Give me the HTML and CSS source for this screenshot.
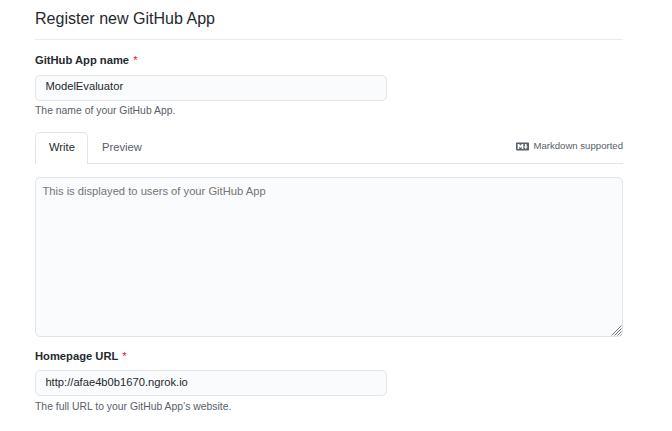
FILE: index.html
```html
<!DOCTYPE html>
<html lang="en">
<head>
<meta charset="utf-8">
<title>Register new GitHub App</title>
<link rel="stylesheet" href="styles.css">
</head>
<body>
<main class="page">
  <h1 class="title">Register new GitHub App</h1>
  <form>
    <label class="label" for="name">GitHub App name <span class="req">*</span></label>
    <input class="field" id="name" type="text" value="ModelEvaluator">
    <p class="note">The name of your GitHub App.</p>
    <div class="tabs">
      <button class="tab selected" type="button">Write</button>
      <button class="tab" type="button">Preview</button>
      <span class="markdown">
        <svg class="md-icon" viewBox="0 0 16 16" aria-hidden="true"><path fill-rule="evenodd" d="M14.85 3H1.15C.52 3 0 3.52 0 4.15v7.69C0 12.48.52 13 1.15 13h13.69c.64 0 1.15-.52 1.15-1.15v-7.7C16 3.52 15.48 3 14.85 3zM9 11H7V8L5.5 9.92 4 8v3H2V5h2l1.5 2L7 5h2v6zm2.99.5L9.5 8H11V5h2v3h1.5l-2.51 3.5z"/></svg>
        Markdown supported
      </span>
    </div>
    <div class="editor">
      <textarea class="description" placeholder="This is displayed to users of your GitHub App"></textarea>
      <svg class="grip" viewBox="0 0 11 11" aria-hidden="true"><path d="M.5 10.5l10-10M3.5 10.5l7-7M6.5 10.5l4-4M9.5 10.5l1-1"/></svg>
    </div>
    <label class="label compact" for="url">Homepage URL <span class="req">*</span></label>
    <input class="field" id="url" type="text" value="http://afae4b0b1670.ngrok.io">
    <p class="note last">The full URL to your GitHub App’s website.</p>
  </form>
</main>
</body>
</html>
```
FILE: styles.css
```css
* { box-sizing: border-box; }
body { margin: 0; background: #fff; color: #24292e; font: 11.2px/16px "Liberation Sans", Arial, sans-serif; }
.page { width: 588px; margin-left: 35px; }
.title { margin: 0 0 12px; height: 40px; padding-top: 8px; border-bottom: 1px solid #e8eaed; font-size: 16.05px; line-height: 21px; font-weight: 400; }
.label { display: block; height: 23px; font-weight: 700; }
.label.compact { height: 22px; }
.req { margin-left: 1px; color: #d92532; font-weight: 400; }
.field { display: block; width: 352px; height: 26px; margin: 0; padding: 0 9.4px 3px; border: 1px solid #e1e4e8; border-radius: 5px; background: #fafbfc; color: #24292e; font: inherit; outline: 0; }
#name { padding-bottom: 4px; }
.note { margin: 2px 0 13px; color: #586069; font-size: 10.4px; line-height: 16px; }
.note.last { margin-top: 3px; margin-bottom: 0; }
.tabs { display: flex; height: 32px; border-bottom: 1px solid #e1e4e8; margin-bottom: 13px; }
.tab { height: 32px; padding: 0 13px 3px; border: 1px solid transparent; border-bottom: 0; background: none; color: #586069; font: inherit; }
.tab.selected { width: 53px; background: #fff; border-color: #e1e4e8; border-radius: 5px 5px 0 0; color: #24292e; }
.markdown { display: flex; align-items: center; gap: 4px; height: 28px; margin-left: auto; color: #586069; font-size: 9.6px; }
.md-icon { width: 13px; height: 13px; fill: #586069; }
.editor { position: relative; height: 160px; margin-bottom: 11px; }
.description { display: block; width: 100%; height: 160px; margin: 0; padding: 5px 6.4px; border: 1px solid #e1e4e8; border-radius: 5px; background: #fafbfc; font: inherit; resize: none; }
.description::placeholder { color: #757575; }
.grip { position: absolute; right: 1px; bottom: 1px; width: 11px; height: 11px; fill: none; stroke: #777; stroke-width: 1; }
```
